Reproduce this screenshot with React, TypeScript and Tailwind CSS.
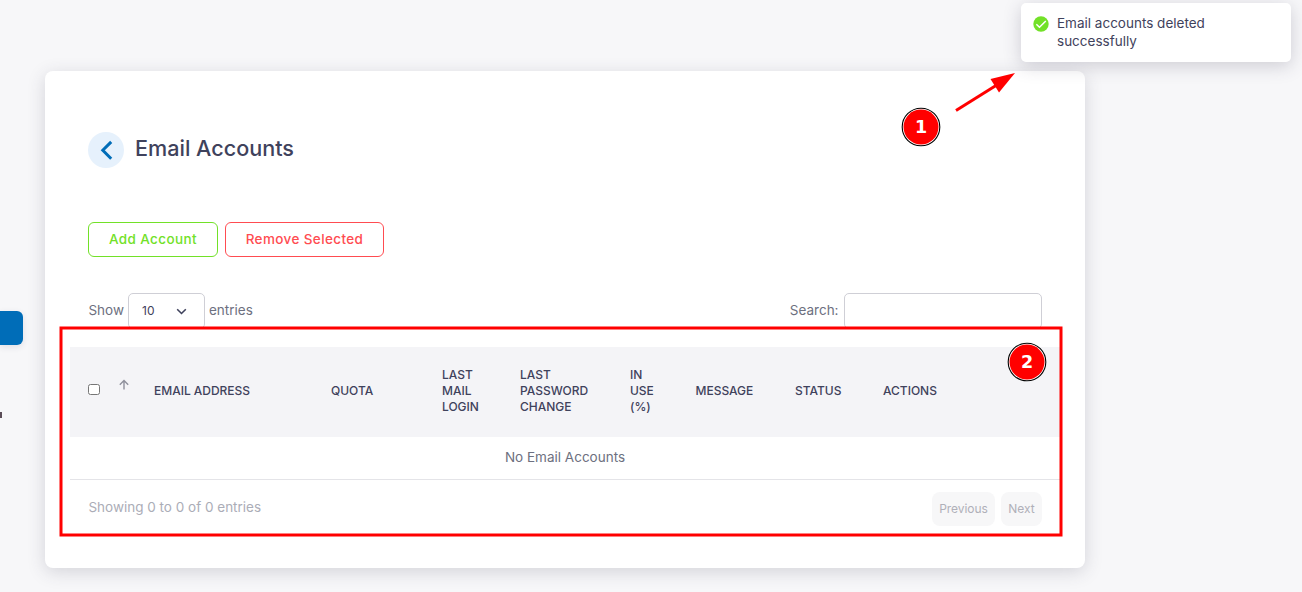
import React from 'react';

const columns = [
  { label: 'Email Address', width: 'w-[177px]' },
  { label: 'Quota', width: 'w-[111px]' },
  { label: 'Last Mail Login', width: 'w-[78px]' },
  { label: 'Last Password Change', width: 'w-[110px]' },
  { label: 'In Use (%)', width: 'w-[65.5px]' },
  { label: 'Message', width: 'w-[99.5px]' },
  { label: 'Status', width: 'w-[88px]' },
  { label: 'Actions', width: 'w-[177px]' },
];

function Marker({ children, className }: { children: string; className: string }) {
  return (
    <div className={`absolute z-30 size-10 ${className}`}>
      <svg className="absolute inset-0 size-10" viewBox="0 0 40 40">
        <circle cx="20" cy="20" r="18.8" fill="#fff" stroke="#000" strokeWidth="1.1" />
        <circle cx="20" cy="20" r="17.5" fill="#f00" />
      </svg>
      <span className="absolute inset-0 flex items-center justify-center pt-[2px] font-['DejaVu_Sans',sans-serif] text-[17.5px] leading-none font-bold text-white">
        {children}
      </span>
    </div>
  );
}

function Toast() {
  return (
    <div className="absolute top-[3px] left-[1021px] z-20 flex h-[59px] w-[270px] rounded-[5px] bg-white pt-[11px] pl-3 shadow-[0_4px_18px_rgba(58,53,80,0.22)]">
      <svg className="mt-0.5 size-4 shrink-0" viewBox="0 0 20 20">
        <circle cx="10" cy="10" r="9.6" fill="#72e128" />
        <path d="M4.2 10.3 8.1 14.1 16 6.3" fill="none" stroke="#fff" strokeWidth="1.9" />
      </svg>
      <p className="ml-2 w-[190px] text-[13.5px] leading-[18px] text-[#3f425c]">
        Email accounts deleted successfully
      </p>
    </div>
  );
}

export default function App() {
  return (
    <div className="relative flex h-[592px] w-[1302px] overflow-hidden bg-[#f7f7f9] font-['Inter',sans-serif] text-[13.5px] text-[#6d7080]">
      <aside className="w-[45px] shrink-0 pt-[311px]">
        <div className="h-[34px] w-[23px] rounded-r-[6px] bg-[#006db8] shadow-[0_2px_6px_rgba(58,53,80,0.12)]" />
        <div className="mt-[67px] h-[6px] w-[2px] bg-[#5b4d58]" />
      </aside>

      <main className="mt-[71px] h-[497px] w-[1040px] rounded-[8px] bg-white px-[25px] shadow-[0_4px_18px_rgba(58,53,80,0.18)]">
        <header className="flex items-center px-[18px] pt-[61px]">
          <button className="flex size-9 items-center justify-center rounded-full bg-[#e6f1fc]">
            <svg className="size-9" viewBox="0 0 36 36">
              <path d="m23.2 9.9-8.4 8.4 8.4 8.4" fill="none" stroke="#006db8" strokeWidth="3" />
            </svg>
          </button>
          <h1 className="-mt-[4px] ml-[11px] text-[21.6px] leading-[30px] font-medium text-[#3f425c]">
            Email Accounts
          </h1>
        </header>

        <div className="mt-[54px] flex gap-[7px] px-[18px] font-medium tracking-[0.387px]">
          <button className="h-[35px] w-[130px] rounded-[6px] border border-[#72e128] pb-px text-[#72e128]">
            Add Account
          </button>
          <button className="h-[35px] w-[159px] rounded-[6px] border border-[#ff4c51] pb-px text-[#ff4c51]">
            Remove Selected
          </button>
        </div>

        <div className="mt-9 flex h-9 items-center justify-between px-[18px]">
          <div className="flex items-center">
            <span className="w-10 pb-px pl-[0.4px]">Show</span>
            <span className="flex h-9 w-[77px] items-center justify-between rounded-[5px] border border-[#cfcfd6] pr-[17px] pl-[13px] text-[12px] text-[#3f425c]">
              10
              <svg className="size-[11px]" viewBox="0 0 11 11">
                <path d="m1.2 3.3 4.3 4.2 4.3-4.2" fill="none" stroke="#3f425c" strokeWidth="1.6" />
              </svg>
            </span>
            <span className="ml-1 pb-px">entries</span>
          </div>
          <label className="flex items-center gap-[5.5px]">
            <span className="pb-px">Search:</span>
            <input className="h-9 w-[198px] rounded-[5px] border border-[#cfcfd6]" />
          </label>
        </div>

        <div className="mt-[18px] flex h-[90px] w-[990px] items-center bg-[#f4f4f7] pb-[3px] text-[12px] leading-4 font-medium tracking-[-0.02px] text-[#3f425c] uppercase">
          <div className="flex w-[84px] items-center pl-[18px]">
            <span className="-mt-[2px] h-[11px] w-[12px] rounded-[2.5px] border border-[#767676] bg-white" />
            <svg className="-mt-[11px] ml-[18px] size-3" viewBox="0 0 12 12">
              <path d="M6 10.5V1.7M1.8 5.8 6 1.6 10.2 5.8" fill="none" stroke="#8f909c" strokeWidth="1.4" />
            </svg>
          </div>
          {columns.map((column) => (
            <div key={column.label} className={`${column.width} shrink-0 pr-[40px]`}>
              {column.label}
            </div>
          ))}
        </div>
        <div className="flex h-[43px] items-center justify-center border-b border-[#e4e4e8] pb-[2px]">
          No Email Accounts
        </div>

        <footer className="flex items-start justify-between px-[18px] pt-3">
          <span className="mt-[5px] pl-[0.4px] leading-5 text-[#abadb7]">Showing 0 to 0 of 0 entries</span>
          <div className="flex gap-[6px] text-[12px] tracking-[-0.05px] text-[#b0b0b9]">
            <button className="h-[34px] w-[63px] rounded-[8px] bg-[#f7f7f8]">Previous</button>
            <button className="h-[34px] w-[41px] rounded-[8px] bg-[#f7f7f8]">Next</button>
          </div>
        </footer>
      </main>

      <Toast />
      <svg className="pointer-events-none absolute inset-0 z-20 h-[592px] w-[1302px]" viewBox="0 0 1302 592">
        <rect x="61" y="328" width="1000" height="207" fill="none" stroke="#f00" strokeWidth="3" />
        <path d="M956 110.5 996 85.5" stroke="#f00" strokeWidth="3" />
        <path d="M1015 73 990.5 79 999 92.5Z" fill="#f00" />
      </svg>
      <Marker className="top-[107px] left-[901px]">1</Marker>
      <Marker className="top-[342px] left-[1007px]">2</Marker>
    </div>
  );
}
